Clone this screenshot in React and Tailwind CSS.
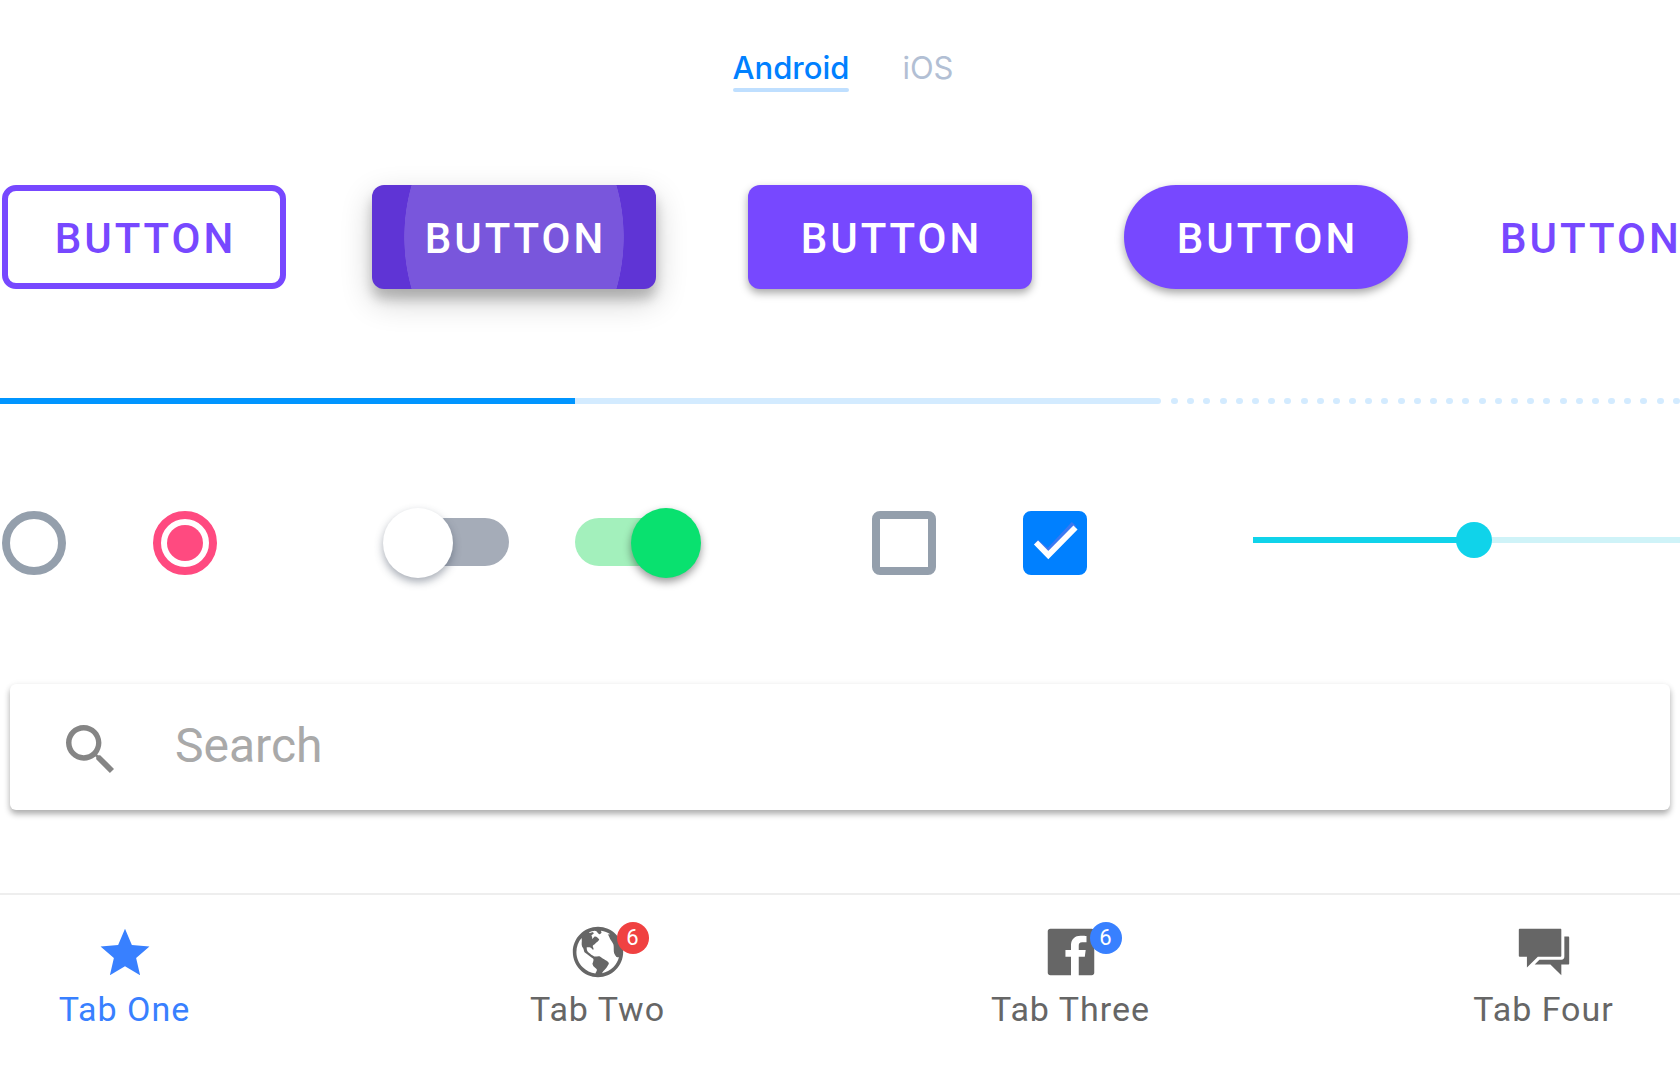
import React, { useState } from 'react';
import { IoLogoFacebook, IoMdChatboxes, IoMdGlobe, IoMdSearch, IoMdStar } from 'react-icons/io';

const platforms = [
    { id: 'android', label: 'Android' },
    { id: 'ios', label: 'iOS' },
];

const tabs = [
    { id: 'one', label: 'Tab One', Icon: IoMdStar },
    { id: 'two', label: 'Tab Two', Icon: IoMdGlobe, badge: 6, badgeColor: 'bg-[#f04141]' },
    { id: 'three', label: 'Tab Three', Icon: IoLogoFacebook, badge: 6, badgeColor: 'bg-[#3880ff]' },
    { id: 'four', label: 'Tab Four', Icon: IoMdChatboxes },
];

const buttonText = 'h-[104px] shrink-0 pt-1 text-[42px] font-medium leading-none tracking-[3px]';
const boxedButton = `${buttonText} w-[284px] pl-[3px]`;

const Radio = ({ label, value, checked, onChange }) => (
    <input
        type="radio"
        name="choice"
        aria-label={label}
        value={value}
        checked={checked}
        onChange={() => onChange(value)}
        className="grid size-16 shrink-0 appearance-none place-items-center rounded-full border-8 border-[#949fac] checked:border-[#ff4a80] before:size-9 before:rounded-full checked:before:bg-[#ff4a80]"
    />
);

const Switch = ({ label, defaultChecked }) => (
    <input
        type="checkbox"
        role="switch"
        aria-label={label}
        defaultChecked={defaultChecked}
        className="relative h-[70px] w-[126px] shrink-0 appearance-none before:absolute before:left-1.5 before:right-0 before:top-2.5 before:h-12 before:rounded-full before:bg-[#a5acb8] checked:before:left-0 checked:before:right-1.5 checked:before:bg-[#a3f0bc] after:absolute after:left-0 after:top-0 after:size-[70px] after:rounded-full after:bg-white after:shadow-[0_4px_8px_rgba(60,70,90,0.45)] checked:after:left-auto checked:after:right-0 checked:after:bg-[#09e16f] checked:after:shadow-[0_4px_8px_rgba(0,0,0,0.4)]"
    />
);

const Checkbox = ({ label, defaultChecked }) => (
    <div className="relative size-16 shrink-0">
        <input
            type="checkbox"
            aria-label={label}
            defaultChecked={defaultChecked}
            className="peer block size-16 appearance-none rounded-lg border-8 border-[#949fac] checked:border-[#0080ff] checked:bg-[#0080ff]"
        />
        <svg
            viewBox="0 0 64 64"
            fill="none"
            className="pointer-events-none absolute inset-0 hidden size-16 peer-checked:block"
        >
            <path d="M13 31L25 41L51 13" stroke="#3b78f2" strokeWidth="6" />
            <path d="M13 31.5L25.3 44L52.5 16.5" stroke="#fff" strokeWidth="5.8" />
        </svg>
    </div>
);

const App = () => {
    const [platform, setPlatform] = useState('android');
    const [choice, setChoice] = useState('b');
    const [level, setLevel] = useState(52);
    const [activeTab, setActiveTab] = useState('one');

    return (
        <div className="flex min-h-screen flex-col overflow-hidden bg-white font-[Roboto,sans-serif]">
            <div className="flex justify-center gap-[53px] pl-1.5 pt-12 font-[Inter,sans-serif] text-[31px] leading-10">
                {platforms.map((p) => (
                    <button
                        key={p.id}
                        type="button"
                        onClick={() => setPlatform(p.id)}
                        className={platform === p.id ? 'font-medium text-[#0080ff]' : 'text-[#b2bfd4]'}
                    >
                        {p.label}
                        <span className={`block h-1 rounded-full ${platform === p.id ? 'bg-[#bfdfff]' : ''}`} />
                    </button>
                ))}
            </div>

            <div className="mt-[93px] flex gap-[86px] pl-0.5">
                <button type="button" className={`${boxedButton} rounded-[14px] border-6 border-[#7748ff] text-[#7748ff]`}>
                    BUTTON
                </button>
                <div className="flex gap-[92px]">
                    <button
                        type="button"
                        className={`${boxedButton} rounded-xl bg-[#5f34d5] bg-[radial-gradient(110px_145px_at_center,#7956dc_99.5%,transparent_100%)] text-white shadow-[0_10px_12px_rgba(0,0,0,0.2),0_12px_32px_rgba(0,0,0,0.2)]`}
                    >
                        BUTTON
                    </button>
                    <button type="button" className={`${boxedButton} rounded-xl bg-[#7748ff] text-white shadow-[0_4px_8px_rgba(0,0,0,0.35)]`}>
                        BUTTON
                    </button>
                    <button type="button" className={`${boxedButton} rounded-full bg-[#7748ff] text-white shadow-[0_4px_8px_rgba(0,0,0,0.35)]`}>
                        BUTTON
                    </button>
                    <button type="button" className={`${buttonText} text-[#7748ff]`}>
                        BUTTON
                    </button>
                </div>
            </div>

            {/* played, buffered and still loading */}
            <div
                role="progressbar"
                aria-label="Progress"
                aria-valuenow={34}
                aria-valuemin={0}
                aria-valuemax={100}
                className="mt-[109px] grid grid-cols-[1161fr_519fr]"
            >
                <div className="h-1.5 overflow-hidden rounded-r-full bg-[#d3ebff]">
                    <div className="h-full bg-[#0095ff]" style={{ width: `${(575 / 1161) * 100}%` }} />
                </div>
                <div className="flex justify-between pl-2.5">
                    {Array.from({ length: 32 }, (_, i) => (
                        <span key={i} className="h-1.5 w-[7px] rounded-full bg-[#d3ebff]" />
                    ))}
                </div>
            </div>

            <div className="mt-[104px] flex items-center pl-0.5">
                <div className="flex gap-[87px]">
                    <Radio label="Option A" value="a" checked={choice === 'a'} onChange={setChoice} />
                    <Radio label="Option B" value="b" checked={choice === 'b'} onChange={setChoice} />
                </div>
                <div className="ml-[166px] flex gap-[66px]">
                    <Switch label="First switch" />
                    <Switch label="Second switch" defaultChecked />
                </div>
                <div className="ml-[171px] flex gap-[87px]">
                    <Checkbox label="First checkbox" />
                    <Checkbox label="Second checkbox" defaultChecked />
                </div>
                <input
                    type="range"
                    aria-label="Level"
                    min="0"
                    max="100"
                    value={level}
                    onChange={(e) => setLevel(Number(e.target.value))}
                    className="ml-[166px] mt-3.5 h-9 min-w-0 flex-1 appearance-none self-start bg-[length:100%_6px] bg-center bg-no-repeat [&::-webkit-slider-thumb]:size-9 [&::-webkit-slider-thumb]:appearance-none [&::-webkit-slider-thumb]:rounded-full [&::-webkit-slider-thumb]:bg-[#10d3ea]"
                    style={{ backgroundImage: `linear-gradient(to right, #10d3ea ${level}%, #cff3f8 ${level}%)` }}
                />
            </div>

            <label className="mx-2.5 mt-[106px] flex h-[126px] items-center gap-[53px] rounded-md bg-white pl-12 shadow-[0_4px_6px_rgba(0,0,0,0.32),0_0_8px_rgba(0,0,0,0.03)]">
                <IoMdSearch className="mt-1 size-16 shrink-0 text-[#858585]" />
                <input
                    type="search"
                    aria-label="Search"
                    placeholder="Search"
                    className="min-w-0 flex-1 pb-1 text-5xl text-[#333] outline-none placeholder:text-[#a9a9a9]"
                />
            </label>

            <nav className="mt-[83px] flex flex-1 justify-between border-t-2 border-[#eee] pl-1 pr-4 pt-[26px]">
                {tabs.map(({ id, label, Icon, badge, badgeColor }) => (
                    <button
                        key={id}
                        type="button"
                        onClick={() => setActiveTab(id)}
                        className={`flex w-[241px] flex-col items-center ${activeTab === id ? 'text-[#3880ff]' : 'text-[#666]'}`}
                    >
                        <span className="relative">
                            <Icon className="size-[62px]" />
                            {badge && (
                                <span className={`absolute -right-5 top-px grid size-8 place-items-center rounded-full text-[22px] leading-none text-white ${badgeColor}`}>
                                    {badge}
                                </span>
                            )}
                        </span>
                        <span className="mt-1.5 text-[34px] leading-10 tracking-[1px]">{label}</span>
                    </button>
                ))}
            </nav>
        </div>
    );
};

export default App;
